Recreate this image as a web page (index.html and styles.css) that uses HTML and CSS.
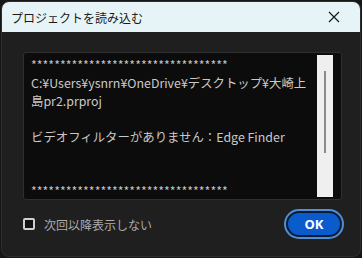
FILE: index.html
```html
<!DOCTYPE html>
<html lang="ja">
<head>
    <meta charset="UTF-8">
    <title>プロジェクトを読み込む</title>
    <link rel="stylesheet" href="styles.css">
</head>
<body>
    <div class="dialog">
        <div class="titlebar">
            <span class="title">プロジェクトを読み込む</span>
            <svg class="close" width="12" height="12" viewBox="0 0 12 12">
                <path d="M1 1 L11 11 M11 1 L1 11" stroke="#1a1a1a" stroke-width="1.2" fill="none"/>
            </svg>
        </div>
        <div class="content">
            <div class="log">
                <div class="log-text">
                    <div class="line stars">**********************************</div>
                    <div class="line">C:¥Users¥ysnrn¥OneDrive¥デスクトップ¥大崎上島pr2.prproj</div>
                    <div class="line">&nbsp;</div>
                    <div class="line">ビデオフィルターがありません：Edge Finder</div>
                    <div class="line">&nbsp;</div>
                    <div class="line">&nbsp;</div>
                    <div class="line stars">**********************************</div>
                </div>
                <div class="scrollbar"><div class="thumb"></div></div>
            </div>
            <div class="footer">
                <label class="check">
                    <span class="box"></span>
                    次回以降表示しない
                </label>
                <button class="ok">OK</button>
            </div>
        </div>
    </div>
</body>
</html>
```

FILE: styles.css
```css
body {
    margin: 0;
    background-color: #161616;
    font-family: "Noto Sans CJK JP", "Noto Sans", sans-serif;
}
.dialog {
    width: 360px;
    height: 256px;
    margin: 1px 0 0 1px;
    background: #1f1f1f;
    border: 1px solid #2e2e2e;
    border-radius: 8px;
    overflow: hidden;
    box-sizing: border-box;
    display: flex;
    flex-direction: column;
}
.titlebar {
    height: 30px;
    background: #e6f4f7;
    display: flex;
    align-items: center;
    justify-content: space-between;
    padding: 0 20px 0 9px;
    flex-shrink: 0;
}
.title {
    font-size: 12px;
    color: #1a1a1a;
}
.content {
    flex: 1;
    padding: 20px 18px 0 21px;
}
.log {
    height: 148px;
    background: #0c0c0c;
    border: 1px solid #2f2f2f;
    border-radius: 3px;
    display: flex;
    box-sizing: border-box;
}
.log-text {
    flex: 1;
    padding: 3px 4px 0 7px;
    font-size: 12.4px;
    line-height: 18px;
    color: #c9c9c9;
    overflow: hidden;
}
.line {
    min-height: 18px;
}
.stars {
    white-space: nowrap;
    overflow: hidden;
}
.scrollbar {
    width: 16px;
    margin: 2px 8px 2px 0;
    background: #efefef;
    display: flex;
    justify-content: center;
}
.thumb {
    width: 2px;
    height: 82px;
    margin-top: 16px;
    background: #8a8a8a;
}
.footer {
    display: flex;
    align-items: center;
    justify-content: space-between;
    margin-top: 9px;
}
.check {
    display: flex;
    align-items: center;
    gap: 9px;
    font-size: 12px;
    color: #ababab;
}
.box {
    width: 8px;
    height: 8px;
    border: 2px solid #cfcfcf;
    border-radius: 2px;
    background: #111;
}
.ok {
    width: 56px;
    height: 26px;
    margin: 2px 0;
    border-radius: 13px;
    background: #0a5ccd;
    color: #fff;
    font-family: "Noto Sans", sans-serif;
    font-weight: bold;
    font-size: 13px;
    border: 2px solid #0d1b30;
    box-shadow: 0 0 0 2px #4f8fd8;
    padding: 0;
}
```
